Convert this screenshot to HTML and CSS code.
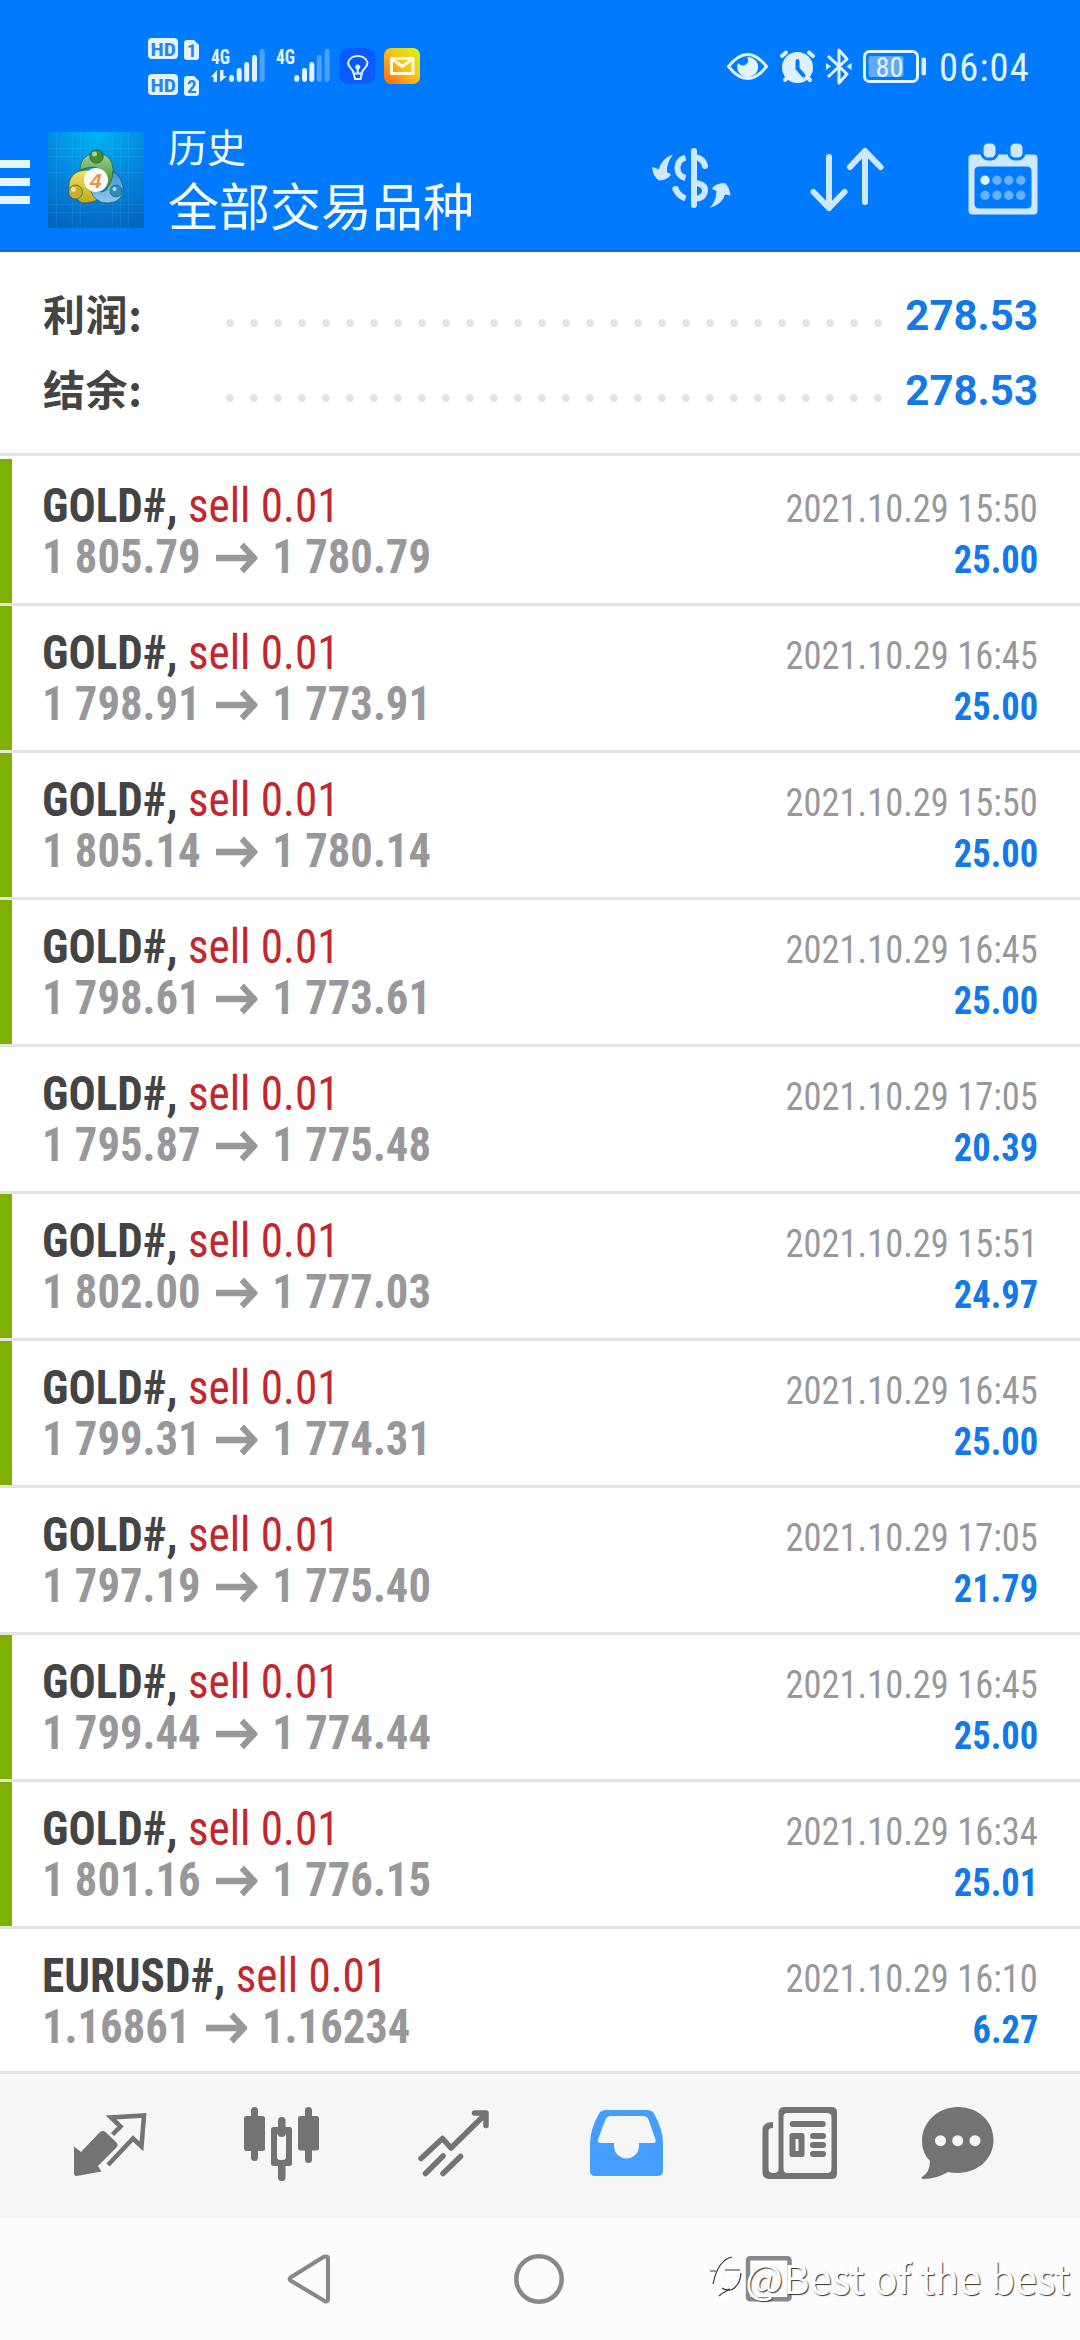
FILE: index.html
```html
<!DOCTYPE html>
<html lang="zh-CN">
<head>
<meta charset="utf-8">
<title>历史</title>
<link rel="stylesheet" href="styles.css">
</head>
<body>
<svg class="defs" width="0" height="0"><symbol id="arrow" viewBox="0 0 42 30"><path d="M0 15H38M26 2.500L38.500 15L26 27.500" fill="none" stroke="currentColor" stroke-width="6"/></symbol></svg>
<header class="header">
  <div class="status">
    <svg class="status-left" width="272" height="60" viewBox="148 36 272 60">
      <defs><linearGradient id="mail" x1="1" y1="0" x2="0" y2="1"><stop offset="0" stop-color="#d6f51c"/><stop offset=".5" stop-color="#fbbd18"/><stop offset="1" stop-color="#ff6512"/></linearGradient></defs>
      <g fill="#e2f2ff">
        <rect x="148" y="38" width="30" height="21" rx="4"/><rect x="148" y="74" width="30" height="21" rx="4"/>
        <path d="M187 40h7l5 5v12q0 3-3 3h-9q-3 0-3-3v-14q0-3 3-3zM187 76h7l5 5v12q0 3-3 3h-9q-3 0-3-3v-14q0-3 3-3z"/>
        <path d="M211 77l6-7v12h-3.500v-5zM220 70v12l7-6h-3.500v-6z"/>
        <rect x="229" y="75" width="5" height="7" rx="2.400"/><rect x="236.700" y="68" width="5" height="14" rx="2.400"/><rect x="244.200" y="62" width="5" height="20" rx="2.400"/><rect x="252" y="55" width="5" height="27" rx="2.400"/>
        <rect x="294.300" y="75" width="5" height="7" rx="2.400"/><rect x="302" y="68" width="5" height="14" rx="2.400"/><rect x="309.300" y="62" width="5" height="20" rx="2.400"/>
      </g>
      <g fill="#4ba3ff"><rect x="259.700" y="49" width="5" height="33" rx="2.400"/><rect x="316.800" y="55" width="5" height="27" rx="2.400"/><rect x="324.600" y="49" width="5" height="33" rx="2.400"/></g>
      <g class="badge-text"><text x="150.500" y="55.500" textLength="25.500" lengthAdjust="spacingAndGlyphs">HD</text><text x="150.500" y="91.500" textLength="25.500" lengthAdjust="spacingAndGlyphs">HD</text><text x="187" y="57">1</text><text x="187" y="93">2</text></g>
      <g class="net-text"><text x="211" y="64" textLength="19" lengthAdjust="spacingAndGlyphs">4G</text><text x="276" y="64" textLength="19" lengthAdjust="spacingAndGlyphs">4G</text></g>
      <rect x="339.500" y="48" width="36" height="36" rx="9" fill="#0b5cff"/>
      <path d="M353.500 73c0-4-5.500-5-5.500-10.500a10 8.500 0 0 1 19.500 0c0 5.500-5.500 6.500-5.500 10.500l-1.500 6h-5.500zM353.500 73.500h8.500M357.700 65v8" fill="none" stroke="#e8f5ff" stroke-width="2"/><circle cx="357.700" cy="67" r="2.500" fill="#e8f5ff"/>
      <rect x="384" y="48" width="36" height="36" rx="7" fill="url(#mail)"/>
      <path d="M391.500 58.500h21.500v15h-21.500zl10.750 8 10.750-8" fill="none" stroke="#fff9df" stroke-width="3" stroke-linejoin="round"/>
    </svg>
    <div class="status-right">
      <svg width="200" height="40" viewBox="727 46 200 40">
        <g fill="none" stroke="#e2f5ff" stroke-width="3">
          <path d="M728.500 66.500Q747.500 42.500 766.500 66.500Q747.500 90.500 728.500 66.500z" stroke-linejoin="round"/>
          <path d="M828 56l19 18-8 9V50l8 9-19 18" stroke-linejoin="round"/>
          <rect x="864.500" y="51.500" width="53" height="30" rx="5"/>
        </g>
        <path d="M747 57a10.500 10 0 1 1-9 6q3 4 8 1.500 4-3 1-7.500z" fill="#e2f5ff"/>
        <g fill="#dff0ff"><circle cx="797.500" cy="67.500" r="15.500"/><path d="M826 63l5 3.500-5 3.500zM851.500 63l-5 3.500 5 3.500z"/><rect x="921.500" y="57.500" width="4.500" height="18" rx="2"/></g>
        <path d="M782 56l4-3.500M813 56l-4-3.500M785 80l3-3M810 80l-3-3" stroke="#dff0ff" stroke-width="4" stroke-linecap="round"/>
        <path d="M797.500 61v7.500l6 7" fill="none" stroke="#007aff" stroke-width="4" stroke-linecap="round"/>
        <rect x="868.500" y="56" width="35" height="21" rx="2" fill="#61a8f7"/>
        <text class="battery" x="875.500" y="76.500" textLength="28" lengthAdjust="spacingAndGlyphs">80</text>
      </svg>
      <span class="clock">06:04</span>
    </div>
  </div>
  <div class="toolbar">
    <div class="menu"><i></i><i></i><i></i></div>
    <svg class="logo" width="96" height="96" viewBox="0 0 96 96">
      <defs>
        <radialGradient id="sky" cx=".5" cy="0" r="1.050"><stop offset="0" stop-color="#00b4f5"/><stop offset=".55" stop-color="#0584da"/><stop offset="1" stop-color="#0465bd"/></radialGradient>
        <linearGradient id="gr" x1="0" y1="0" x2="0" y2="1"><stop offset="0" stop-color="#a6d48c"/><stop offset="1" stop-color="#32852b"/></linearGradient>
        <linearGradient id="ye" x1="0" y1="0" x2="0" y2="1"><stop offset="0" stop-color="#f4e263"/><stop offset="1" stop-color="#c4a717"/></linearGradient>
        <linearGradient id="bl" x1="0" y1="0" x2="0" y2="1"><stop offset="0" stop-color="#3a92d4"/><stop offset="1" stop-color="#8fcaf0"/></linearGradient>
      </defs>
      <path d="M0 0h96v96H0z" fill="url(#sky)"/>
      <path d="M8.500 0v96M24.500 0v96M32.500 0v96M64.500 0v96M72.500 0v96M80.500 0v96M0 16.500h96M0 24.500h96M0 40.500h96M0 72.500h96M0 80.500h96" stroke="#5fc8ff" stroke-opacity=".12"/>
      <g stroke="#174f4b" stroke-opacity=".6">
        <path d="M22 62C18 46 26 38 40 38L45 47Q37 58 50 67Q46 71 34 71Z" fill="url(#ye)"/>
        <path d="M42 57Q46 71 60 71Q76 70 75 55Q73 43 64 39L60 54Q58 64 42 57Z" fill="url(#bl)"/>
        <path d="M32 38C32 27 40 21 48 21Q65 22 65 38Q65 50 58 57L56 41Q49 31 32 38Z" fill="url(#gr)"/>
        <circle cx="48.500" cy="24.500" r="6.800" fill="#438d39"/><circle cx="27.500" cy="60" r="7" fill="#c9ad2f"/><circle cx="68" cy="59" r="6" fill="#328bc5"/>
      </g>
      <circle cx="46.500" cy="22" r="2.500" fill="#a5d294"/><circle cx="25.500" cy="57.500" r="2.500" fill="#f3e39a"/><circle cx="66.500" cy="57" r="2" fill="#a7d9f4"/>
      <circle cx="48" cy="48" r="12" fill="#fff"/>
      <text class="logo-num" x="42" y="55.500">4</text>
    </svg>
    <div class="titles"><div class="sub">历史</div><div class="main">全部交易品种</div></div>
    <div class="actions">
      <svg width="80" height="64" viewBox="650 146 80 64">
        <g fill="none" stroke="#cfe7ff" stroke-width="6"><path d="M693 151v54" stroke-linecap="round"/><path d="M684.500 157.500Q676.500 160 676.500 168T684.500 178M674 187Q676 195.500 684.500 198.500"/><path d="M674.500 189v0M704 166v0" stroke-linecap="round"/><path d="M694 157Q702.500 158.500 704 166M694 183Q704.500 184 704 191T694 199"/></g>
        <g fill="#cfe7ff"><path d="M672 154.500Q665.500 163 666 172L670 174.500Q667 180 658 180.500Q652 177 651 167Q654 167 657.500 169.500Q661 158 672 154.500z"/><path d="M708.500 208Q715 202 715.500 191L711 189Q713 183.500 724 183Q728.500 187 729.500 195.500L724 194.500Q721.500 204 708.500 208z"/></g>
      </svg>
      <svg width="76" height="68" viewBox="808 145 76 68"><path d="M828 157v51M812.500 192l15.500 16 15.500-16M864 202v-51M849 167l15-16 15.500 16" fill="none" stroke="#cfe7ff" stroke-width="6" stroke-linecap="round" stroke-linejoin="round"/></svg>
      <svg width="70" height="74" viewBox="967.500 141.500 70 74">
        <path fill="#cfe7ff" fill-rule="evenodd" d="M972 154h61q4 0 4 4v52q0 4-4 4h-61q-4 0-4-4v-52q0-4 4-4zM979 166q-5 0-5 5v32q0 5 5 5h47q5 0 5-5v-32q0-5-5-5z"/>
        <g fill="#cfe7ff" stroke="#007aff" stroke-width="3"><rect x="981.500" y="141.500" width="15" height="17" rx="6"/><rect x="1008.500" y="141.500" width="15" height="17" rx="6"/></g>
        <circle cx="984.500" cy="179.700" r="4.700" fill="#d8f2ff"/>
        <g fill="#66b0ff"><circle cx="996.500" cy="179.700" r="4.700"/><circle cx="1008.300" cy="179.700" r="4.700"/><circle cx="1020.300" cy="179.700" r="4.700"/><circle cx="984.500" cy="194.700" r="4.700"/><circle cx="996.500" cy="194.700" r="4.700"/><circle cx="1008.300" cy="194.700" r="4.700"/><circle cx="1020.300" cy="194.700" r="4.700"/></g>
      </svg>
    </div>
  </div>
</header>
<section class="summary">
  <div class="sum-row"><span class="label">利润:</span><span class="dots"></span><span class="total">278.53</span></div>
  <div class="sum-row"><span class="label">结余:</span><span class="dots"></span><span class="total">278.53</span></div>
</section>
<main class="deals">
  <div class="deal tp"><div class="line"><span class="name"><b>GOLD#,</b> sell 0.01</span><span class="date">2021.10.29 15:50</span></div><div class="line"><span class="price">1 805.79 <svg class="arr"><use href="#arrow"/></svg> 1 780.79</span><span class="profit">25.00</span></div></div>
  <div class="deal tp"><div class="line"><span class="name"><b>GOLD#,</b> sell 0.01</span><span class="date">2021.10.29 16:45</span></div><div class="line"><span class="price">1 798.91 <svg class="arr"><use href="#arrow"/></svg> 1 773.91</span><span class="profit">25.00</span></div></div>
  <div class="deal tp"><div class="line"><span class="name"><b>GOLD#,</b> sell 0.01</span><span class="date">2021.10.29 15:50</span></div><div class="line"><span class="price">1 805.14 <svg class="arr"><use href="#arrow"/></svg> 1 780.14</span><span class="profit">25.00</span></div></div>
  <div class="deal tp"><div class="line"><span class="name"><b>GOLD#,</b> sell 0.01</span><span class="date">2021.10.29 16:45</span></div><div class="line"><span class="price">1 798.61 <svg class="arr"><use href="#arrow"/></svg> 1 773.61</span><span class="profit">25.00</span></div></div>
  <div class="deal"><div class="line"><span class="name"><b>GOLD#,</b> sell 0.01</span><span class="date">2021.10.29 17:05</span></div><div class="line"><span class="price">1 795.87 <svg class="arr"><use href="#arrow"/></svg> 1 775.48</span><span class="profit">20.39</span></div></div>
  <div class="deal tp"><div class="line"><span class="name"><b>GOLD#,</b> sell 0.01</span><span class="date">2021.10.29 15:51</span></div><div class="line"><span class="price">1 802.00 <svg class="arr"><use href="#arrow"/></svg> 1 777.03</span><span class="profit">24.97</span></div></div>
  <div class="deal tp"><div class="line"><span class="name"><b>GOLD#,</b> sell 0.01</span><span class="date">2021.10.29 16:45</span></div><div class="line"><span class="price">1 799.31 <svg class="arr"><use href="#arrow"/></svg> 1 774.31</span><span class="profit">25.00</span></div></div>
  <div class="deal"><div class="line"><span class="name"><b>GOLD#,</b> sell 0.01</span><span class="date">2021.10.29 17:05</span></div><div class="line"><span class="price">1 797.19 <svg class="arr"><use href="#arrow"/></svg> 1 775.40</span><span class="profit">21.79</span></div></div>
  <div class="deal tp"><div class="line"><span class="name"><b>GOLD#,</b> sell 0.01</span><span class="date">2021.10.29 16:45</span></div><div class="line"><span class="price">1 799.44 <svg class="arr"><use href="#arrow"/></svg> 1 774.44</span><span class="profit">25.00</span></div></div>
  <div class="deal tp"><div class="line"><span class="name"><b>GOLD#,</b> sell 0.01</span><span class="date">2021.10.29 16:34</span></div><div class="line"><span class="price">1 801.16 <svg class="arr"><use href="#arrow"/></svg> 1 776.15</span><span class="profit">25.01</span></div></div>
  <div class="deal"><div class="line"><span class="name"><b>EURUSD#,</b> sell 0.01</span><span class="date">2021.10.29 16:10</span></div><div class="line"><span class="price">1.16861 <svg class="arr"><use href="#arrow"/></svg> 1.16234</span><span class="profit">6.27</span></div></div>
</main>
<nav class="tabs">
  <svg width="171" height="144" viewBox="20 2074 171 144"><path d="M112.500 2134.500l8-8-9.500-9 33-2-2.500 31-8.500-8-25 26.500" fill="none" stroke="#737373" stroke-width="4.500"/><path d="M74 2146.500l7 5.500 19-20q3-2 5.500 0l11 10.500q2 2.500 0 5L98 2166l3.500 5.500-25 4.500q-2.500 0-2.500-2.500z" fill="#737373"/></svg>
  <svg width="173" height="144" viewBox="191 2074 173 144"><g fill="#737373"><rect x="251" y="2107" width="7" height="54" rx="3.500"/><rect x="244" y="2116" width="21" height="35" rx="2.500"/><rect x="278" y="2117" width="7.500" height="20" rx="3.500"/><rect x="278" y="2160" width="7.500" height="21" rx="3.500"/><path fill-rule="evenodd" d="M273.500 2127h16q2.500 0 2.500 2.500v34q0 2.500-2.500 2.500h-16q-2.500 0-2.500-2.500v-34q0-2.500 2.500-2.500zM280 2133q-3 0-3 3v21q0 3 3 3h3q3 0 3-3v-21q0-3-3-3z"/><rect x="305" y="2107" width="7" height="56" rx="3.500"/><rect x="298" y="2116" width="21" height="34.500" rx="2.500"/></g></svg>
  <svg width="173" height="144" viewBox="364 2074 173 144"><path d="M421 2158.500l21.500-20 8.500 9.500 34-33.500M425.500 2173.500l17.500-17.500M443 2173.500l17.500-17M474.500 2113h11.500v12.500" fill="none" stroke="#737373" stroke-width="5.500" stroke-linecap="round" stroke-linejoin="round"/></svg>
  <svg width="173" height="144" viewBox="537 2074 173 144"><path fill="#459eff" fill-rule="evenodd" d="M606 2110h41q5 0 7 3.500 9 16 9 30v27q0 5.500-5.500 5.500h-62q-5.500 0-5.500-5.500v-27q0-14 9-30 2-3.500 7-3.500zM611 2116q-4 0-5.500 3.500l-7.500 20q-1 3.500 3 3.500h13v3a12.500 12.500 0 0 0 25 0v-3h14q3.500 0 2.500-3.500l-7-20q-1.500-3.500-5.500-3.500z"/></svg>
  <svg width="158" height="144" viewBox="710 2074 158 144"><g fill="#737373"><path fill-rule="evenodd" d="M784 2107h47.500q5.500 0 5.500 5.500v61q0 5.500-5.500 5.500H769q-6.500 0-6.500-6.500v-43q0-7.500 10.500-7.500v6q-4.500-.500-4.500 3v38q0 4 5 4t5-4v-56q0-6 5.500-6zM787 2113q-3.500 0-3.500 3.500v52q0 4.500 4 4.500h39.500q4.500 0 4.500-4.500v-51q0-4.500-4.500-4.500z"/><path fill-rule="evenodd" d="M792 2133h10q2.500 0 2.500 2.500v19q0 2.500-2.500 2.500h-10q-2.500 0-2.500-2.500v-19q0-2.500 2.500-2.500zM795.500 2139v12h3v-12z"/><rect x="789.700" y="2121" width="36" height="6" rx="3"/><rect x="810" y="2133" width="16" height="6" rx="3"/><rect x="810" y="2142" width="16" height="6" rx="3"/><rect x="810" y="2151" width="16" height="6" rx="3"/></g></svg>
  <svg width="180" height="144" viewBox="868 2074 180 144"><path d="M922 2177q8-5 8-16-8-8-8-20c0-19 16-34 36-34s35.500 14 35.500 33-16 33-36 33q-5 0-9.500-1-12 7-24 7-3 0-2-2z" fill="#737373"/><g fill="#f6f6f6"><circle cx="940.500" cy="2140.700" r="5.500"/><circle cx="957.700" cy="2140.700" r="5.500"/><circle cx="975" cy="2140.700" r="5.500"/></g></svg>
</nav>
<footer class="system">
  <svg width="60" height="60" viewBox="279 2249 60 60"><path d="M326 2256.500q2 0 2 2v41q0 2.500-2.500 2l-35-21q-2-1.500 0-3l33-20.500z" fill="none" stroke="#888" stroke-width="4"/></svg>
  <svg width="60" height="60" viewBox="510 2249 60 60"><circle cx="540" cy="2279" r="22.700" fill="none" stroke="#888" stroke-width="4.500"/></svg>
  <svg width="60" height="60" viewBox="739 2249 60 60"><rect x="748" y="2258.300" width="41.500" height="41" rx="2" fill="none" stroke="#888" stroke-width="4.500"/></svg>
  <div class="watermark">
    <svg width="36" height="46" viewBox="708 2262 36 46"><g fill="none"><path d="M712 2281h7q3-16 17-16M726 2280h15q0 20-22 27M716 2282l-4 16" stroke="#fff" stroke-width="4"/><path d="M710 2279h6M713 2292q5-24 19-27M725 2278h15M741 2281q-1 13-10 17-5 0-12 6M722 2296q4 3 8 1" stroke="#333" stroke-width="1.200"/></g></svg><span>@Best of the best</span>
  </div>
</footer>
</body>
</html>
```
FILE: styles.css
```css
* { box-sizing: border-box; }
body { margin: 0; width: 1080px; height: 2340px; overflow: hidden; background: #fff; font-family: Roboto, "Noto Sans CJK SC", sans-serif; display: flex; flex-direction: column; }
svg { display: block; flex: none; }
.defs { position: absolute; }
.header { height: 252px; flex: none; background: #007aff; border-bottom: 2px solid #1565cf; }
.status { height: 132px; padding: 36px 51px 0 148px; display: flex; justify-content: space-between; }
.status-right { display: flex; padding-top: 10px; gap: 12px; }
.clock { width: 90px; color: #e2f5ff; font: 38.5px/44px "Roboto Condensed", Roboto, sans-serif; letter-spacing: 1.2px; white-space: nowrap; }
.badge-text { font: 700 19px "Roboto Condensed", Roboto, sans-serif; fill: #2b83ec; }
.net-text { font: 700 20px "Roboto Condensed", Roboto, sans-serif; fill: #e2f2ff; }
.battery { font: 28px "Roboto Condensed", Roboto, sans-serif; fill: #e2f5ff; }
.toolbar { display: flex; align-items: flex-start; height: 118px; }
.menu { width: 30px; margin: 28px 18px 0 0; display: grid; gap: 10px; }
.menu i { height: 8px; background: #e6f6ff; }
.logo-num { font: italic 700 21px "Liberation Sans", sans-serif; fill: #f0913f; }
.titles { margin: -11px 0 0 24px; color: #f4fbff; font-family: "Noto Sans CJK SC", sans-serif; white-space: nowrap; }
.sub { font-size: 39px; line-height: 48px; }
.main { font-size: 51px; line-height: 70px; }
.actions { flex: 1; display: flex; justify-content: space-between; padding: 10px 42px 0 0; margin-left: 177px; }
.actions svg:first-child { margin-top: 4px; }
.actions svg:nth-child(2) { margin: 3px 6px 0 0; }
.summary { height: 201px; flex: none; padding: 26px 42px 0 43px; }
.sum-row { height: 75px; display: flex; align-items: center; }
.label { width: 183px; padding-bottom: 5px; font: 700 42px/70px "Noto Sans CJK SC", sans-serif; letter-spacing: .6px; color: #444; }
.dots { width: 672px; height: 8px; margin-top: 14px; background: radial-gradient(circle at 4px 4px, #e2e2e2 3.5px, transparent 4.2px) 0 0 / 24px 8px; }
.total { flex: 1; text-align: right; font-size: 42px; font-weight: 700; color: #1279e6; }
.deals { height: 1621px; flex: none; border-top: 3px solid #e3e3e3; padding-top: 3px; }
.deal { height: 147px; padding: 21px 42px 0 42px; background: linear-gradient(#e3e3e3, #e3e3e3) 0 100% / 100% 3px no-repeat; font-family: "Roboto Condensed", Roboto, sans-serif; }
.tp { background: linear-gradient(#e3e3e3, #e3e3e3) 0 100% / 100% 3px no-repeat, linear-gradient(#7fb000, #7fb000) 0 0 / 12px 144px no-repeat; }
.deal:last-child { height: 145px; }
.line { height: 51px; line-height: 51px; display: flex; justify-content: space-between; align-items: baseline; white-space: nowrap; }
.name, .price { font-size: 48px; transform: scaleX(.94); transform-origin: 0 50%; }
.price { transform: scaleX(.93); }
.name { color: #c1272d; }
.name b { color: #444; }
.price { color: #98989b; font-weight: 700; }
.arr { display: inline-block; width: 45px; height: 32px; margin: 0 5px; vertical-align: -1px; }
.date, .profit { font-size: 39px; transform: scaleX(.935); transform-origin: 100% 50%; }
.date { color: #98989b; }
.profit { color: #1279e6; font-weight: 700; }
.tabs { flex: 1 0 144px; background: #f6f6f6; display: flex; padding-left: 20px; overflow: hidden; }
.system { position: relative; height: 122px; flex: none; background: #fcfcfc; display: flex; gap: 170px; padding: 31px 0 0 279px; }
.watermark { position: absolute; right: 10px; top: 29px; display: flex; align-items: center; gap: 1px; color: #fff; font: 40px/60px "Noto Sans CJK SC", sans-serif; text-shadow: 1px 1px 1px #333; white-space: nowrap; }
```
